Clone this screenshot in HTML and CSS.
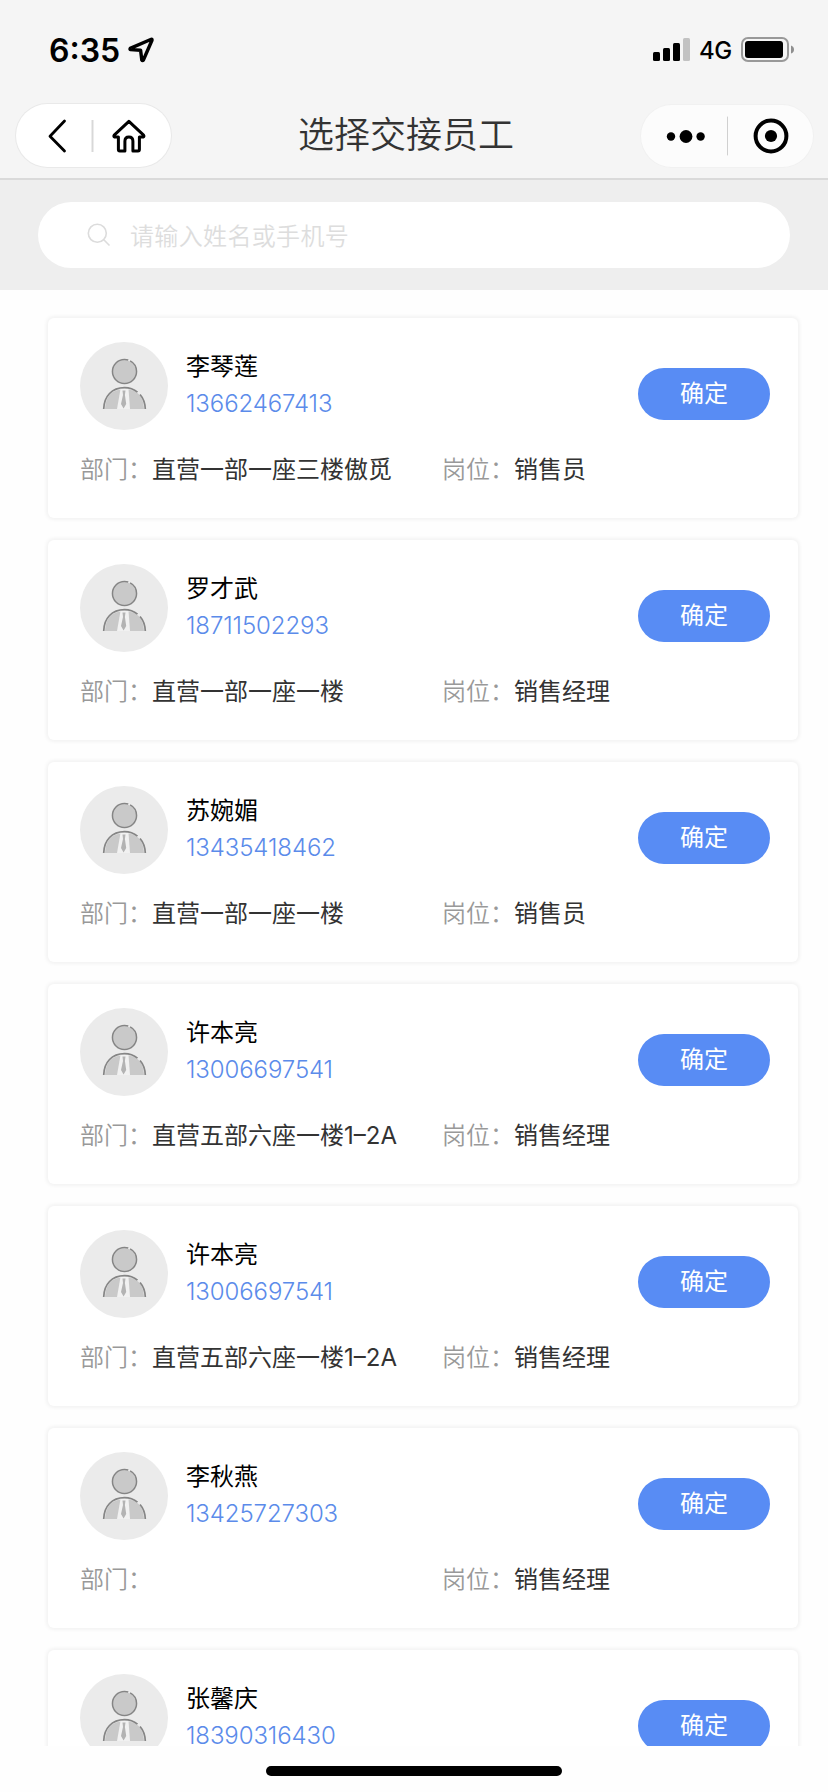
FILE: index.html
```html
<!DOCTYPE html>
<html lang="zh-CN">
	<head>
		<meta charset="utf-8">
		<title>选择交接员工</title>
		<link rel="stylesheet" href="styles.css">
	</head>
	<body>
	<div class="header">
		<div class="status">
			<span class="time">6:35</span>
			<svg class="location" width="28" height="28" viewBox="0 0 28 28"><path d="M24.3 3.3 L3.2 12.4 Q2.6 13.3 3.6 13.6 L13.6 14.3 L14.8 24 Q15.5 25 16.4 24 L25 4.2 Q25.2 3 24.3 3.3Z"/></svg>
			<svg class="signal" width="38" height="24" viewBox="0 0 38 24">
				<rect x="0" y="14" width="7" height="9" rx="1.5"/>
				<rect x="10" y="10" width="7" height="13" rx="1.5"/>
				<rect x="20" y="5" width="7" height="18" rx="1.5"/>
				<rect class="off" x="30" y="0" width="7" height="23" rx="1.5"/>
			</svg>
			<span class="network">4G</span>
			<svg class="battery" width="54" height="26" viewBox="0 0 54 26">
				<rect class="shell" x="1" y="1" width="46" height="23" rx="6"/>
				<rect x="4" y="4" width="38" height="17" rx="3"/>
				<path class="cap" d="M50 8.5 Q53 9.5 53 12.5 Q53 15.5 50 16.5Z"/>
			</svg>
		</div>
		<div class="nav">
			<div class="capsule capsule-left">
				<svg width="155" height="63" viewBox="0 0 155 63">
					<path class="back" d="M48.5 17 L34 32.2 L48.5 47"/>
					<path class="split" d="M76.5 16 V48"/>
					<path class="home" d="M102.4 33 H98.7 Q97.3 32.4 98.2 31.2 L112.9 17.4 L127.6 31.2 Q128.5 32.4 127.1 33 H123.4 V45.5 Q123.4 47 122 47 H116.9 V37.2 Q116.9 33 112.9 33 Q108.9 33 108.9 37.2 V47 H103.8 Q102.4 47 102.4 45.5 Z"/>
				</svg>
			</div>
			<h1 class="title">选择交接员工</h1>
			<div class="capsule capsule-right">
				<svg width="172" height="62" viewBox="0 0 172 62">
					<circle cx="30" cy="31.5" r="4.2"/>
					<circle cx="45" cy="31.5" r="6.4"/>
					<circle cx="59.6" cy="31.5" r="4.2"/>
					<path class="thin" d="M86.5 12 V50"/>
					<circle class="ring" cx="130" cy="31" r="15.4"/>
					<circle cx="130" cy="31" r="6.1"/>
				</svg>
			</div>
		</div>
	</div>
	<div class="search">
		<div class="search-box">
			<svg width="24" height="24" viewBox="0 0 24 24"><circle cx="10.3" cy="10.3" r="9"/><path d="M16.8 16.8 L22.5 22.5"/></svg>
			<span>请输入姓名或手机号</span>
		</div>
	</div>
	<!-- 头像 -->
	<svg class="defs" width="0" height="0">
		<symbol id="avatar" viewBox="0 0 88 88">
			<circle cx="44" cy="44" r="44" fill="#ebebeb"/>
			<circle cx="44.5" cy="29.5" r="11.2" fill="#c9c9c9"/>
			<circle cx="44.5" cy="29.5" r="12" fill="none" stroke="#858585" stroke-width="1.6" stroke-dasharray="60 2 14"/>
			<path d="M25 67 Q25.5 47.500 44.5 47 Q63.5 47.5 64 67Z" fill="#c9c9c9"/>
			<path d="M40.5 47 L37 67 H50 L48.500 47Z" fill="#f1f1f1"/>
			<path d="M42.5 48.500 H45.5 L44.9 53 L46.2 62 L43.6 66.500 L41 62 L43 53Z" fill="#b3b3b3"/>
			<path d="M23.7 67 C24 54 32 45.7 44.5 45.7 Q52 45.7 57.500 50.2 M60 52.500 Q65 58 65.3 67" fill="none" stroke="#858585" stroke-width="1.700"/>
		</symbol>
	</svg>
	<ul class="list">
		<li class="card">
			<div class="top">
				<svg class="avatar"><use href="#avatar"/></svg>
				<div class="who"><p class="name">李琴莲</p><p class="phone">13662467413</p></div>
				<a class="btn">确定</a>
			</div>
			<div class="info">
				<p><span class="label">部门：</span>直营一部一座三楼傲觅</p>
				<p><span class="label">岗位：</span>销售员</p>
			</div>
		</li>
		<li class="card">
			<div class="top">
				<svg class="avatar"><use href="#avatar"/></svg>
				<div class="who"><p class="name">罗才武</p><p class="phone">18711502293</p></div>
				<a class="btn">确定</a>
			</div>
			<div class="info">
				<p><span class="label">部门：</span>直营一部一座一楼</p>
				<p><span class="label">岗位：</span>销售经理</p>
			</div>
		</li>
		<li class="card">
			<div class="top">
				<svg class="avatar"><use href="#avatar"/></svg>
				<div class="who"><p class="name">苏婉媚</p><p class="phone">13435418462</p></div>
				<a class="btn">确定</a>
			</div>
			<div class="info">
				<p><span class="label">部门：</span>直营一部一座一楼</p>
				<p><span class="label">岗位：</span>销售员</p>
			</div>
		</li>
		<li class="card">
			<div class="top">
				<svg class="avatar"><use href="#avatar"/></svg>
				<div class="who"><p class="name">许本亮</p><p class="phone">13006697541</p></div>
				<a class="btn">确定</a>
			</div>
			<div class="info">
				<p><span class="label">部门：</span>直营五部六座一楼1–2A</p>
				<p><span class="label">岗位：</span>销售经理</p>
			</div>
		</li>
		<li class="card">
			<div class="top">
				<svg class="avatar"><use href="#avatar"/></svg>
				<div class="who"><p class="name">许本亮</p><p class="phone">13006697541</p></div>
				<a class="btn">确定</a>
			</div>
			<div class="info">
				<p><span class="label">部门：</span>直营五部六座一楼1–2A</p>
				<p><span class="label">岗位：</span>销售经理</p>
			</div>
		</li>
		<li class="card">
			<div class="top">
				<svg class="avatar"><use href="#avatar"/></svg>
				<div class="who"><p class="name">李秋燕</p><p class="phone">13425727303</p></div>
				<a class="btn">确定</a>
			</div>
			<div class="info">
				<p><span class="label">部门：</span></p>
				<p><span class="label">岗位：</span>销售经理</p>
			</div>
		</li>
		<li class="card">
			<div class="top">
				<svg class="avatar"><use href="#avatar"/></svg>
				<div class="who"><p class="name">张馨庆</p><p class="phone">18390316430</p></div>
				<a class="btn">确定</a>
			</div>
		</li>
	</ul>
	<div class="bottom"><div class="bar"></div></div>
	</body>
</html>
```

FILE: styles.css
```css
* {margin: 0;padding: 0;box-sizing: border-box;}
li{list-style: none;}
svg{display: block;flex-shrink: 0;}
body {
	height: 1792px;
	display: flex;
	flex-direction: column;
	overflow: hidden;
	background: #fefefe;
	font-family: Inter, "Noto Sans CJK SC", sans-serif;
	font-size: 24px;
	color: #333;
}
.header {
	height: 180px;
	flex-shrink: 0;
	background: #f5f5f5;
	border-bottom: 2px solid #dadada;
}
.status {
	height: 103px;
	padding: 0 33px 3px 49px;
	display: flex;
	align-items: center;
	color: #000;
}
.time {
	width: 78px;
	font-size: 32px;
	font-weight: 600;
}
.location {
	fill: none;
	stroke: #000;
	stroke-width: 3.4;
	stroke-linejoin: round;
}
.signal {
	margin-left: auto;
}
.signal .off {
	fill: #c2c2c2;
}
.network {
	width: 42px;
	margin: 1px 0 0 8px;
	font-weight: 500;
	letter-spacing: -0.5px;
}
.battery .shell {
	fill: none;
	stroke: #999;
	stroke-width: 2;
}
.battery .cap {
	fill: #8f8f8f;
}
.nav {
	height: 64px;
	padding: 0 15px 0 16px;
	display: flex;
	align-items: center;
	justify-content: space-between;
}
.capsule {
	border-radius: 32px;
	background: #fff;
	box-shadow: 0 0 0 1px #e9e9e9;
}
.capsule-right {
	margin-top: 2px;
	background: #fcfcfc;
	box-shadow: 0 0 0 1px #f1f1f1;
}
.capsule path {
	fill: none;
	stroke: #000;
	stroke-width: 2.8;
	stroke-linecap: round;
	stroke-linejoin: round;
}
.capsule .home {
	stroke-width: 3;
}
.capsule .split {
	stroke: #d8d8d8;
	stroke-width: 2;
	stroke-linecap: butt;
}
.capsule .thin {
	stroke: #d0d0d0;
	stroke-width: 1;
}
.capsule .ring {
	fill: none;
	stroke: #000;
	stroke-width: 4;
}
.title {
	font-size: 36px;
	line-height: 64px;
	font-weight: 350;
}
.search {
	height: 110px;
	flex-shrink: 0;
	padding: 22px 38px;
	background: #eee;
}
.search-box {
	height: 66px;
	padding-left: 49px;
	display: flex;
	align-items: center;
	border-radius: 33px;
	background: #fff;
	color: #ddd;
	font-weight: 350;
	letter-spacing: 0.35px;
}
.search-box svg {
	margin-right: 19px;
	fill: none;
	stroke: #dcdcdc;
	stroke-width: 1.6;
}
.search-box span {
	margin-top: -2px;
}
.defs {
	position: absolute;
}
.list {
	flex: 1;
	min-height: 0;
	padding: 28px 30px 0 48px;
	overflow: hidden;
}
.card {
	height: 200px;
	margin-bottom: 22px;
	padding: 24px 28px 0 32px;
	border-radius: 6px;
	background: #fff;
	box-shadow: 0 0 4px 1px #eee;
}
.top {
	display: flex;
}
.avatar {
	width: 88px;
	height: 88px;
}
.who {
	flex: 1;
	padding: 6px 0 0 18px;
}
.name {
	line-height: 38px;
	color: #000;
}
.phone {
	margin-top: 8px;
	line-height: 20px;
	color: #5b8bea;
	font-weight: 300;
	letter-spacing: -0.1px;
}
.btn {
	width: 132px;
	height: 52px;
	margin-top: 26px;
	border-radius: 26px;
	background: #588cf4;
	color: #fff;
	line-height: 52px;
	text-align: center;
}
.info {
	display: grid;
	grid-template-columns: 362px 1fr;
	margin-top: 22px;
	line-height: 36px;
}
.label {
	color: #999;
	font-weight: 350;
}
.bottom {
	height: 46px;
	flex-shrink: 0;
	padding-top: 20px;
}
.bar {
	width: 296px;
	height: 10px;
	margin: 0 auto;
	border-radius: 5px;
	background: #000;
}
```
